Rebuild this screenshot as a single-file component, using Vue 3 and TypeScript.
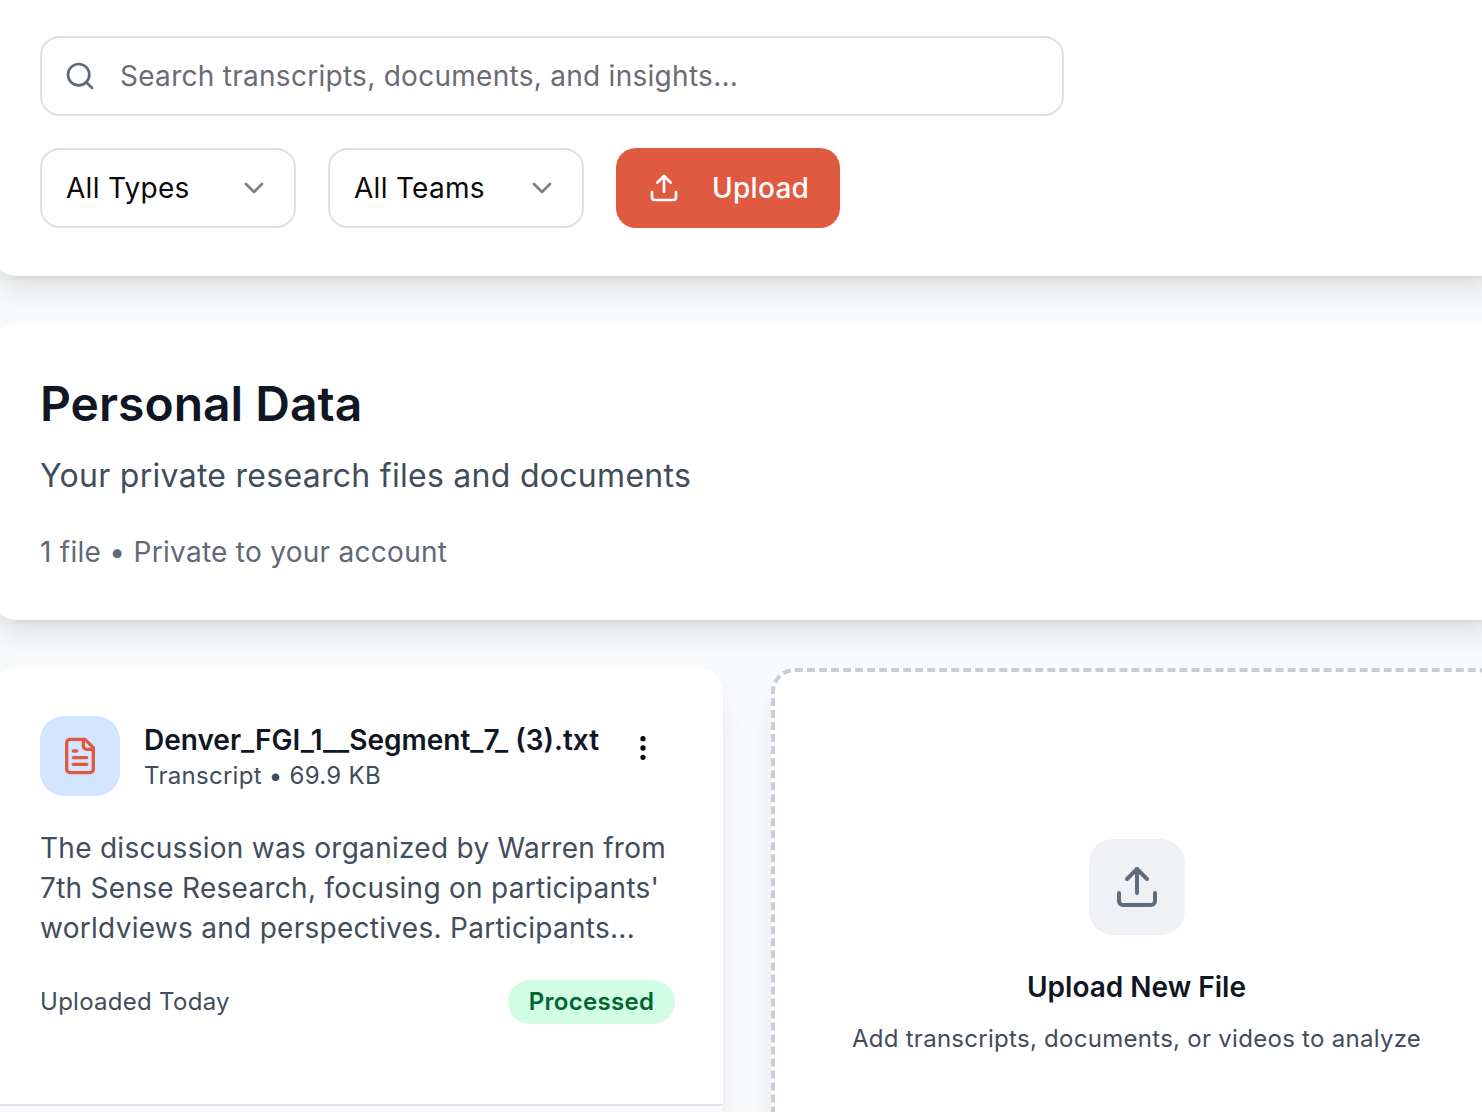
<script setup lang="ts">
interface FilterOption {
  id: string
  label: string
}

interface ResearchFile {
  name: string
  kind: string
  size: string
  summary: string[]
  uploaded: string
  status: string
}

const filters: FilterOption[] = [
  { id: 'types', label: 'All Types' },
  { id: 'teams', label: 'All Teams' },
]

const files: ResearchFile[] = [
  {
    name: 'Denver_FGI_1__Segment_7_ (3).txt',
    kind: 'Transcript',
    size: '69.9 KB',
    summary: [
      'The discussion was organized by Warren from',
      "7th Sense Research, focusing on participants'",
      'worldviews and perspectives. Participants...',
    ],
    uploaded: 'Uploaded Today',
    status: 'Processed',
  },
]
</script>

<template>
  <main class="viewport">
    <div class="content">
      <section class="card toolbar">
        <div class="search">
          <svg class="icon icon-32 search-icon" viewBox="0 0 24 24">
            <circle cx="11" cy="11" r="8" />
            <path d="m21 21-4.3-4.3" />
          </svg>
          <span class="placeholder">Search transcripts, documents, and insights...</span>
        </div>
        <div class="controls">
          <button v-for="filter in filters" :key="filter.id" class="select" type="button">
            <span>{{ filter.label }}</span>
            <svg class="icon icon-32 chevron" viewBox="0 0 24 24">
              <path d="m6 9 6 6 6-6" />
            </svg>
          </button>
          <button class="upload" type="button">
            <svg class="icon icon-32" viewBox="0 0 24 24">
              <path d="M12 3v12" />
              <path d="m17 8-5-5-5 5" />
              <path d="M21 15v4a2 2 0 0 1-2 2H5a2 2 0 0 1-2-2v-4" />
            </svg>
            <span>Upload</span>
          </button>
        </div>
      </section>

      <section class="card intro">
        <h1>Personal Data</h1>
        <p class="subtitle">Your private research files and documents</p>
        <p class="meta">1 file • Private to your account</p>
      </section>

      <div class="grid">
        <article v-for="file in files" :key="file.name" class="card file">
          <div class="file-body">
            <header class="file-head">
              <div class="file-badge">
                <svg class="icon icon-40" viewBox="0 0 24 24">
                  <path d="M15 2H6a2 2 0 0 0-2 2v16a2 2 0 0 0 2 2h12a2 2 0 0 0 2-2V7Z" />
                  <path d="M14 2v4a2 2 0 0 0 2 2h4" />
                  <path d="M10 9H8" />
                  <path d="M16 13H8" />
                  <path d="M16 17H8" />
                </svg>
              </div>
              <div class="file-title">
                <h2>{{ file.name }}</h2>
                <p>{{ file.kind }} • {{ file.size }}</p>
              </div>
              <button class="more" type="button" aria-label="More actions">
                <svg class="icon icon-32" viewBox="0 0 24 24">
                  <circle cx="12" cy="12" r="1" />
                  <circle cx="12" cy="5" r="1" />
                  <circle cx="12" cy="19" r="1" />
                </svg>
              </button>
            </header>
            <p class="summary">
              <span v-for="line in file.summary" :key="line">{{ line }}</span>
            </p>
            <div class="file-status">
              <span class="uploaded">{{ file.uploaded }}</span>
              <span class="status">{{ file.status }}</span>
            </div>
          </div>
          <footer class="file-footer"></footer>
        </article>

        <article class="card dropzone">
          <div class="drop-icon">
            <svg class="icon icon-48" viewBox="0 0 24 24">
              <path d="M12 3v12" />
              <path d="m17 8-5-5-5 5" />
              <path d="M21 15v4a2 2 0 0 1-2 2H5a2 2 0 0 1-2-2v-4" />
            </svg>
          </div>
          <h2>Upload New File</h2>
          <p>Add transcripts, documents, or videos to analyze</p>
        </article>
      </div>
    </div>
  </main>
</template>

<style>
html,
body {
  margin: 0;
  background: #fff;
}
</style>

<style scoped>
.viewport {
  width: 1482px;
  height: 1112px;
  overflow: hidden;
  background: #f8fafb;
  font-family: Inter, 'Liberation Sans', sans-serif;
  font-optical-sizing: none;
  font-size: 28px;
  line-height: 40px;
  letter-spacing: 0.28px;
  color: #414d5b;
}

h1,
h2,
p {
  margin: 0;
}

button {
  font: inherit;
  letter-spacing: inherit;
  margin: 0;
}

.content {
  display: flex;
  flex-direction: column;
  gap: 48px;
  width: 1510px;
  margin-left: -8px;
}

.card {
  box-sizing: border-box;
  background: #fff;
  border-radius: 24px;
  box-shadow: 0 20px 30px -6px rgba(0, 0, 0, 0.1), 0 8px 12px -8px rgba(0, 0, 0, 0.1);
}

.icon {
  display: block;
  flex: none;
  fill: none;
  stroke: currentColor;
  stroke-width: 2;
  stroke-linecap: round;
  stroke-linejoin: round;
}

.icon-32 {
  width: 32px;
  height: 32px;
}

.icon-40 {
  width: 40px;
  height: 40px;
}

.icon-48 {
  width: 48px;
  height: 48px;
}

.toolbar {
  height: 276px;
  padding: 36px 48px 48px;
  border-top-left-radius: 0;
  border-top-right-radius: 0;
}

.search {
  box-sizing: border-box;
  display: flex;
  align-items: center;
  gap: 24px;
  width: 1024px;
  height: 80px;
  padding: 0 22px;
  border: 2px solid #dfdfe4;
  border-radius: 20px;
}

.search-icon {
  color: #5f6b7a;
}

.placeholder {
  color: #6b6b76;
}

.controls {
  display: flex;
  gap: 32px;
  margin-top: 32px;
}

.select {
  box-sizing: border-box;
  display: flex;
  align-items: center;
  justify-content: space-between;
  width: 256px;
  height: 80px;
  padding: 0 24px;
  border: 2px solid #dfdfe4;
  border-radius: 20px;
  background: #fff;
  color: #0a0a0a;
}

.chevron {
  color: #7f7f7f;
}

.upload {
  box-sizing: border-box;
  display: flex;
  align-items: center;
  gap: 32px;
  width: 224px;
  height: 80px;
  padding: 0 32px;
  border: 0;
  border-radius: 20px;
  background: #e05a41;
  color: #fff;
  font-weight: 500;
}

.intro {
  height: 296px;
  padding: 48px;
}

.intro h1 {
  font-size: 48px;
  line-height: 64px;
  font-weight: 600;
  letter-spacing: 0;
  color: #101624;
}

.subtitle {
  margin-top: 16px;
  font-size: 32px;
  line-height: 48px;
}

.meta {
  margin-top: 32px;
  color: #616877;
}

.grid {
  display: grid;
  grid-template-columns: 731px 731px;
  gap: 48px;
}

.file {
  display: flex;
  flex-direction: column;
  height: 540px;
  overflow: hidden;
}

.file-body {
  box-sizing: border-box;
  height: 436px;
  padding: 48px 48px 0;
}

.file-head {
  display: flex;
  align-items: flex-start;
}

.file-badge {
  display: flex;
  align-items: center;
  justify-content: center;
  width: 80px;
  height: 80px;
  border-radius: 24px;
  background: #d4e5ff;
  color: #e05a41;
}

.file-title {
  flex: 1;
  margin: 4px 0 0 24px;
  white-space: nowrap;
}

.file-title h2,
.dropzone h2 {
  font-size: 28px;
  line-height: 40px;
  font-weight: 600;
  letter-spacing: 0;
  color: #101624;
}

.file-title p {
  font-size: 24px;
  line-height: 32px;
}

.more {
  display: flex;
  align-items: center;
  justify-content: center;
  width: 64px;
  height: 64px;
  padding: 0;
  border: 0;
  background: none;
  color: #0a0a0a;
}

.summary {
  margin-top: 32px;
}

.summary span {
  display: block;
  white-space: nowrap;
}

.file-status {
  display: flex;
  align-items: center;
  justify-content: space-between;
  margin-top: 32px;
  font-size: 24px;
  line-height: 32px;
}

.status {
  box-sizing: border-box;
  width: 167px;
  height: 44px;
  padding: 6px 0;
  border-radius: 22px;
  background: #d3fce5;
  color: #016630;
  font-weight: 600;
  text-align: center;
}

.file-footer {
  flex: 1;
  border-top: 2px solid #e0e2e9;
  background: #f9f9fb;
}

.dropzone {
  display: flex;
  flex-direction: column;
  align-items: center;
  padding-top: 167px;
  border: 4px dashed #c9ced6;
}

.drop-icon {
  display: flex;
  align-items: center;
  justify-content: center;
  width: 96px;
  height: 96px;
  border-radius: 24px;
  background: #f0f1f5;
  color: #616b7a;
}

.dropzone h2 {
  margin-top: 32px;
}

.dropzone p {
  margin-top: 16px;
  font-size: 24px;
  line-height: 32px;
}
</style>
